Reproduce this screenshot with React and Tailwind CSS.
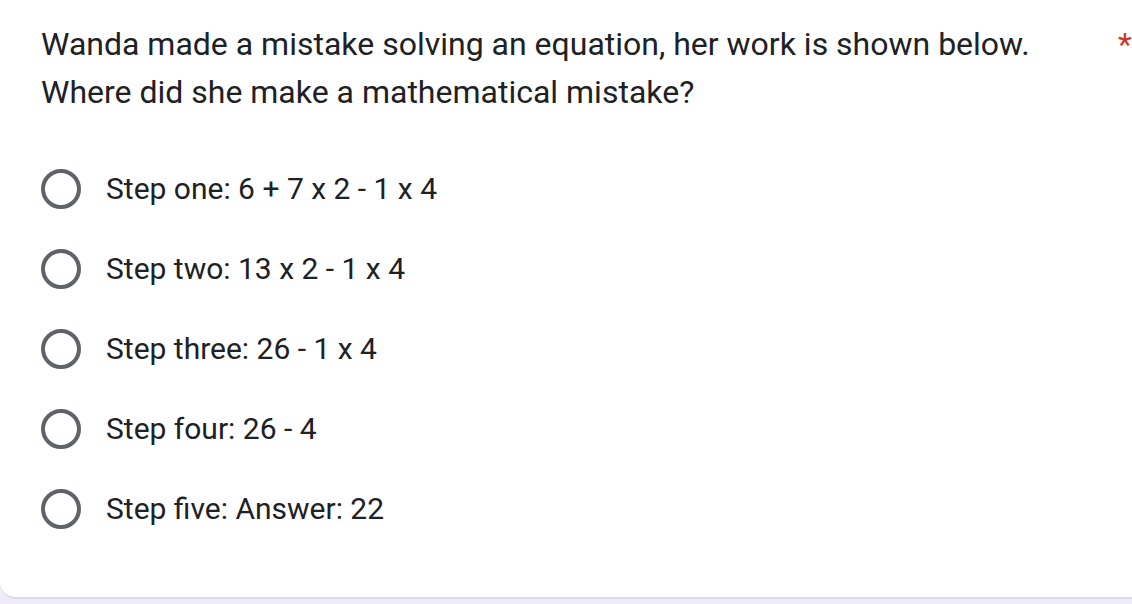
import React from "react";

const options = [
  "Step one: 6 + 7 x 2 - 1 x 4",
  "Step two: 13 x 2 - 1 x 4",
  "Step three: 26 - 1 x 4",
  "Step four: 26 - 4",
  "Step five: Answer: 22",
];

export default function App() {
  return (
    <div className="w-[1132px] h-[604px] bg-[#f0ebf8] overflow-hidden" style={{ fontFamily: "Roboto, 'Liberation Sans', sans-serif" }}>
      <div className="w-[1160px] h-[599px] bg-white rounded-b-[16px] border-b-2 border-[#dadce0] pl-[41px] pt-[20px]">
        <div className="flex">
          <div className="w-[1070px] text-[32px] leading-[48px] text-[#202124]">
            Wanda made a mistake solving an equation, her work is shown below.
            <br />
            Where did she make a mathematical mistake?
          </div>
          <span className="text-[32px] leading-[48px] text-[#d93025] ml-[7px]">*</span>
        </div>
        <div className="mt-[33px] flex flex-col">
          {options.map((o) => (
            <div key={o} className="flex items-center h-[80px]">
              <div className="w-[40px] h-[40px] rounded-full border-[4px] border-[#5f6368]" />
              <span className="ml-[25px] text-[30px] leading-[40px] text-[#202124]">{o}</span>
            </div>
          ))}
        </div>
      </div>
    </div>
  );
}
